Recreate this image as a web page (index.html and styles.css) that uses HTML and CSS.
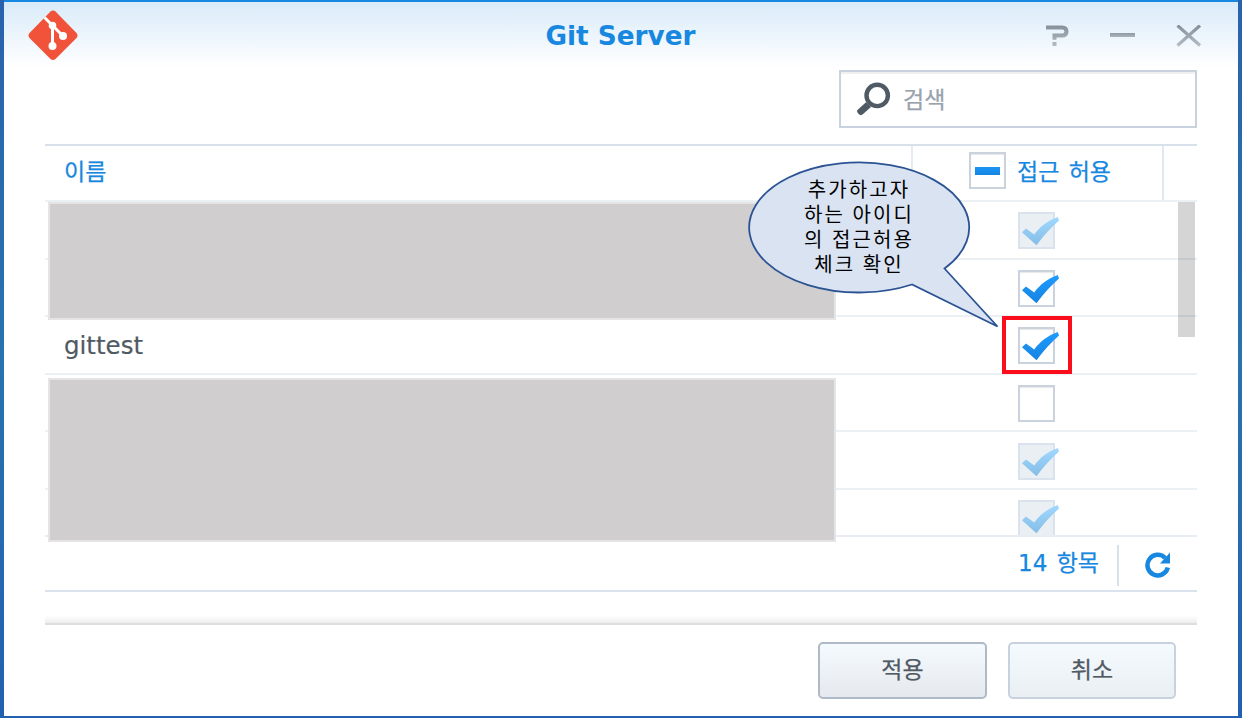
FILE: index.html
```html
<!DOCTYPE html>
<html lang="ko">
<head>
    <meta charset="UTF-8">
    <meta name="viewport" content="width=device-width, initial-scale=1.0">
    <title>Git Server</title>
    <link rel="stylesheet" href="styles.css">
</head>
<body>
  <!-- shared icon shapes -->
  <svg class="defs" width="0" height="0">
    <defs>
      <linearGradient id="tickBlue" x1="0" y1="0" x2="0" y2="1">
        <stop offset="0" stop-color="#1f9cff"/>
        <stop offset="1" stop-color="#1583e0"/>
      </linearGradient>
      <linearGradient id="tickPale" x1="0" y1="0" x2="0" y2="1">
        <stop offset="0" stop-color="#a0d8ff"/>
        <stop offset="1" stop-color="#86bde6"/>
      </linearGradient>
      <linearGradient id="toolGray" gradientUnits="userSpaceOnUse" x1="0" y1="0" x2="0" y2="21">
        <stop offset="0" stop-color="#848f9a"/>
        <stop offset="1" stop-color="#b3bcc4"/>
      </linearGradient>
      <linearGradient id="lineGray" x1="0" y1="0" x2="0" y2="1">
        <stop offset="0" stop-color="#8f9aa5"/>
        <stop offset="1" stop-color="#aab4bc"/>
      </linearGradient>
      <symbol id="tick" viewBox="0 0 37 29">
        <path d="M0 15.200 L4 11.500 L12.200 17.500 C18 9.500 26 3.500 35.800 0 L37 3.500 C29.500 10 22 18 14.500 28.300 Z" fill="url(#tickBlue)"/>
      </symbol>
      <symbol id="tick-pale" viewBox="0 0 37 29">
        <path d="M0 15.200 L4 11.500 L12.200 17.500 C18 9.500 26 3.500 35.800 0 L37 3.500 C29.500 10 22 18 14.500 28.300 Z" fill="url(#tickPale)"/>
      </symbol>
    </defs>
  </svg>

  <div class="window">
    <header class="title-bar">
      <svg class="logo" width="50" height="52" viewBox="0 0 50 52">
        <path d="M22.500 1.500 Q25 -.5 27.500 1.500 L48.500 23 Q50.500 25.500 48.500 28 L27.500 49 Q25 51 22.500 49 L1.500 28 Q-.5 25.500 1.500 23 Z" fill="#f0523a"/>
        <path d="M16.500 7.500 L24.500 15.500 L35 26 M24.500 15 V36" fill="none" stroke="#fff" stroke-width="3"/>
        <circle cx="24.500" cy="15.500" r="3.800" fill="#fff"/>
        <circle cx="35" cy="26" r="4" fill="#fff"/>
        <circle cx="24.500" cy="36" r="4" fill="#fff"/>
      </svg>
      <h1 class="title">Git Server</h1>
      <div class="tools">
        <svg width="24" height="22" viewBox="0 0 24 22">
          <path d="M0 2.500 H16 Q20.500 2.500 20.500 6.500 Q20.500 10.500 16 10.500 H8.500 V14.800 M8.500 17 V21" fill="none" stroke="url(#toolGray)" stroke-width="4"/>
        </svg>
        <svg width="26" height="22" viewBox="0 0 26 22">
          <rect x="0" y="8" width="25" height="4" fill="url(#lineGray)"/>
        </svg>
        <svg width="26" height="22" viewBox="0 0 26 22">
          <path d="M1.500 .5 L24 20.500 M24 .5 L1.500 20.500" fill="none" stroke="url(#toolGray)" stroke-width="3.200"/>
        </svg>
      </div>
    </header>

    <div class="search-row">
      <div class="search-box">
        <svg width="34" height="34" viewBox="0 0 34 34">
          <circle cx="20.200" cy="13.400" r="10.700" fill="none" stroke="#505a64" stroke-width="4.400"/>
          <path d="M9 20.200 L14 25 L5.800 32.300 Q4 34 2 32.200 L.8 31 Q-.8 29.200 1 27.600 Z" fill="#505a64"/>
        </svg>
        <span class="placeholder">검색</span>
      </div>
    </div>

    <div class="grid">
      <div class="grid-header">
        <div class="col-name">이름</div>
        <div class="col-access">
          <span class="checkbox partial"></span>
          <span class="access-label">접근 허용</span>
        </div>
      </div>

      <div class="grid-body">
        <div class="row"><span class="user"></span><span class="checkbox disabled"><svg class="tick"><use href="#tick-pale"/></svg></span></div>
        <div class="row"><span class="user"></span><span class="checkbox"><svg class="tick"><use href="#tick"/></svg></span></div>
        <div class="row"><span class="user">gittest</span><span class="checkbox"><svg class="tick"><use href="#tick"/></svg></span></div>
        <div class="row"><span class="user"></span><span class="checkbox"></span></div>
        <div class="row"><span class="user"></span><span class="checkbox disabled"><svg class="tick"><use href="#tick-pale"/></svg></span></div>
        <div class="row"><span class="user"></span><span class="checkbox disabled"><svg class="tick"><use href="#tick-pale"/></svg></span></div>
        <div class="scrollbar"></div>
      </div>

      <div class="grid-footer">
        <span class="count">14 항목</span>
        <span class="divider"></span>
        <svg class="refresh" width="26" height="26" viewBox="0 0 26 26">
          <path d="M20.200 6 A10.300 10.300 0 1 0 22.800 15.500" fill="none" stroke="#1787e0" stroke-width="4.500"/>
          <path d="M25 .5 V11.500 H15 Z" fill="#1787e0"/>
        </svg>
      </div>

      <div class="cover cover-top"></div>
      <div class="cover cover-bottom"></div>
    </div>

    <div class="bottom-line"></div>

    <div class="buttons">
      <button class="btn btn-apply">적용</button>
      <button class="btn">취소</button>
    </div>

    <!-- annotations over the window -->
    <div class="highlight"></div>
    <div class="callout">
      <svg width="254" height="170" viewBox="0 0 254 170">
        <path d="M198.500 108.500 A110 65 0 1 0 166 124.500 L251.500 166.500 Z" fill="#dae3f2" stroke="#2b5393" stroke-width="1.800"/>
      </svg>
      <p class="callout-text">추가하고자<br>하는 아이디<br>의 접근허용<br>체크 확인</p>
    </div>
  </div>
</body>
</html>
```
FILE: styles.css
```css
* {
  box-sizing: border-box;
}

body {
  margin: 0;
  height: 718px;
  padding: 0 4px 2px;
  overflow: hidden;
  background: linear-gradient(#2a62ad, #2873b0 50%, #2360b0);
  font-family: "DejaVu Sans", "Noto Sans CJK KR", sans-serif;
  font-size: 23px;
  color: #505a64;
}

.defs {
  position: absolute;
}

.window {
  position: relative;
  height: 716px;
  padding: 0 41px;
  border-top: 2px solid #1787e0;
  background: linear-gradient(#d9ebf9, #fff 66px);
}

.title-bar {
  display: flex;
  justify-content: space-between;
  align-items: center;
  height: 68px;
  margin: 0 -5px 0 -17px;
}

.logo {
  margin-right: 117px;
}

.title {
  margin: 0;
  font-size: 26.3px;
  line-height: 68px;
  color: #1787e0;
}

.tools {
  display: flex;
  gap: 40px;
}

.search-row {
  display: flex;
  justify-content: flex-end;
}

.search-box {
  display: flex;
  align-items: center;
  gap: 12px;
  width: 358px;
  height: 58px;
  padding-left: 16px;
  border: 2px solid #c8d2de;
  background: #fff;
  box-shadow: inset 0 2px 1px #eeeff1;
}

.placeholder {
  padding-bottom: 2px;
  color: #98a2ad;
  -webkit-text-stroke: .25px;
}

.grid {
  position: relative;
  height: 448px;
  margin-top: 16px;
  border-top: 2px solid #d7e1ec;
  border-bottom: 2px solid #d9e3ee;
  background: #fff;
}

.grid-header {
  display: flex;
  height: 56px;
  border-bottom: 2px solid #ebf0f5;
  line-height: 53px;
  color: #1787e0;
  -webkit-text-stroke: .25px;
}

.col-name {
  width: 868px;
  padding-left: 19px;
  border-right: 2px solid #e3ebf3;
}

.col-access {
  display: flex;
  align-items: center;
  gap: 11px;
  width: 251px;
  padding-left: 56px;
  padding-bottom: 5px;
  border-right: 2px solid #e0e8f1;
}

.access-label {
  padding-top: 3px;
  word-spacing: 2px;
}

.grid-body {
  position: relative;
  height: 333px;
  overflow: hidden;
}

.row {
  display: flex;
  align-items: center;
  height: 57.6px;
  padding-top: 2px;
  border-bottom: 2px solid #ebf0f5;
}

.user {
  width: 973px;
  padding-left: 19px;
  font-size: 24.5px;
  -webkit-text-stroke: .2px;
}

.checkbox {
  position: relative;
  flex: none;
  width: 37px;
  height: 37px;
  border: 2px solid #cad2de;
  background: #fff;
  box-shadow: inset 0 1px 1px #e8e8e8;
}

.partial::after {
  content: "";
  display: block;
  width: 25px;
  height: 8px;
  margin: 13px 4px;
  background: linear-gradient(#1b95f5, #1585e3);
}

.disabled {
  border-color: #d9e2ed;
  background: #eaeff4;
  box-shadow: none;
}

.tick {
  position: absolute;
  left: 2px;
  top: 3px;
  width: 37px;
  height: 29px;
}

.scrollbar {
  position: absolute;
  top: 0;
  right: 2px;
  width: 17px;
  height: 135px;
  background: rgba(0, 0, 0, .165);
}

.grid-footer {
  display: flex;
  justify-content: flex-end;
  align-items: center;
  height: 55px;
  padding-right: 26px;
  border-top: 2px solid #e8edf3;
  color: #1787e0;
}

.divider {
  width: 2px;
  height: 41px;
  margin: 3px 26px 0 18px;
  background: #d7e1ec;
}

.refresh {
  margin-top: 3px;
}

.count {
  padding-bottom: 1px;
  line-height: 50px;
  word-spacing: 2px;
  -webkit-text-stroke: .25px;
}

.cover {
  position: absolute;
  left: 3px;
  width: 788px;
  border: 2px solid #e6e5e5;
  background: #d0cecf;
}

.cover-top {
  top: 56px;
  height: 118px;
}

.cover-bottom {
  top: 232px;
  height: 164px;
}

.bottom-line {
  height: 9px;
  margin-top: 24px;
  border-bottom: 2px solid #dcdedf;
  background: linear-gradient(#fff, #ededed);
}

.buttons {
  display: flex;
  justify-content: flex-end;
  gap: 21px;
  margin-top: 17px;
  padding-right: 21px;
}

.btn {
  width: 168px;
  height: 57px;
  padding: 0 0 5px;
  border: 2px solid #c8d2de;
  border-radius: 5px;
  background: linear-gradient(#f5faff, #eaeff4);
  font: inherit;
  color: #505a64;
  -webkit-text-stroke: .25px;
}

.btn-apply {
  width: 169px;
  border-color: #afbac8;
  background: linear-gradient(#f5faff, #e5e9ee);
}

.highlight {
  position: absolute;
  left: 998px;
  top: 314px;
  width: 70px;
  height: 58px;
  border: 4px solid #fc0d1b;
}

.callout {
  position: absolute;
  left: 742px;
  top: 158px;
  width: 254px;
}

.callout-text {
  position: absolute;
  left: 42px;
  top: 16px;
  width: 142px;
  margin: 0;
  font-family: "Noto Sans CJK KR", sans-serif;
  font-size: 20px;
  line-height: 25px;
  letter-spacing: 2.1px;
  text-align: center;
  color: #000;
}
```
